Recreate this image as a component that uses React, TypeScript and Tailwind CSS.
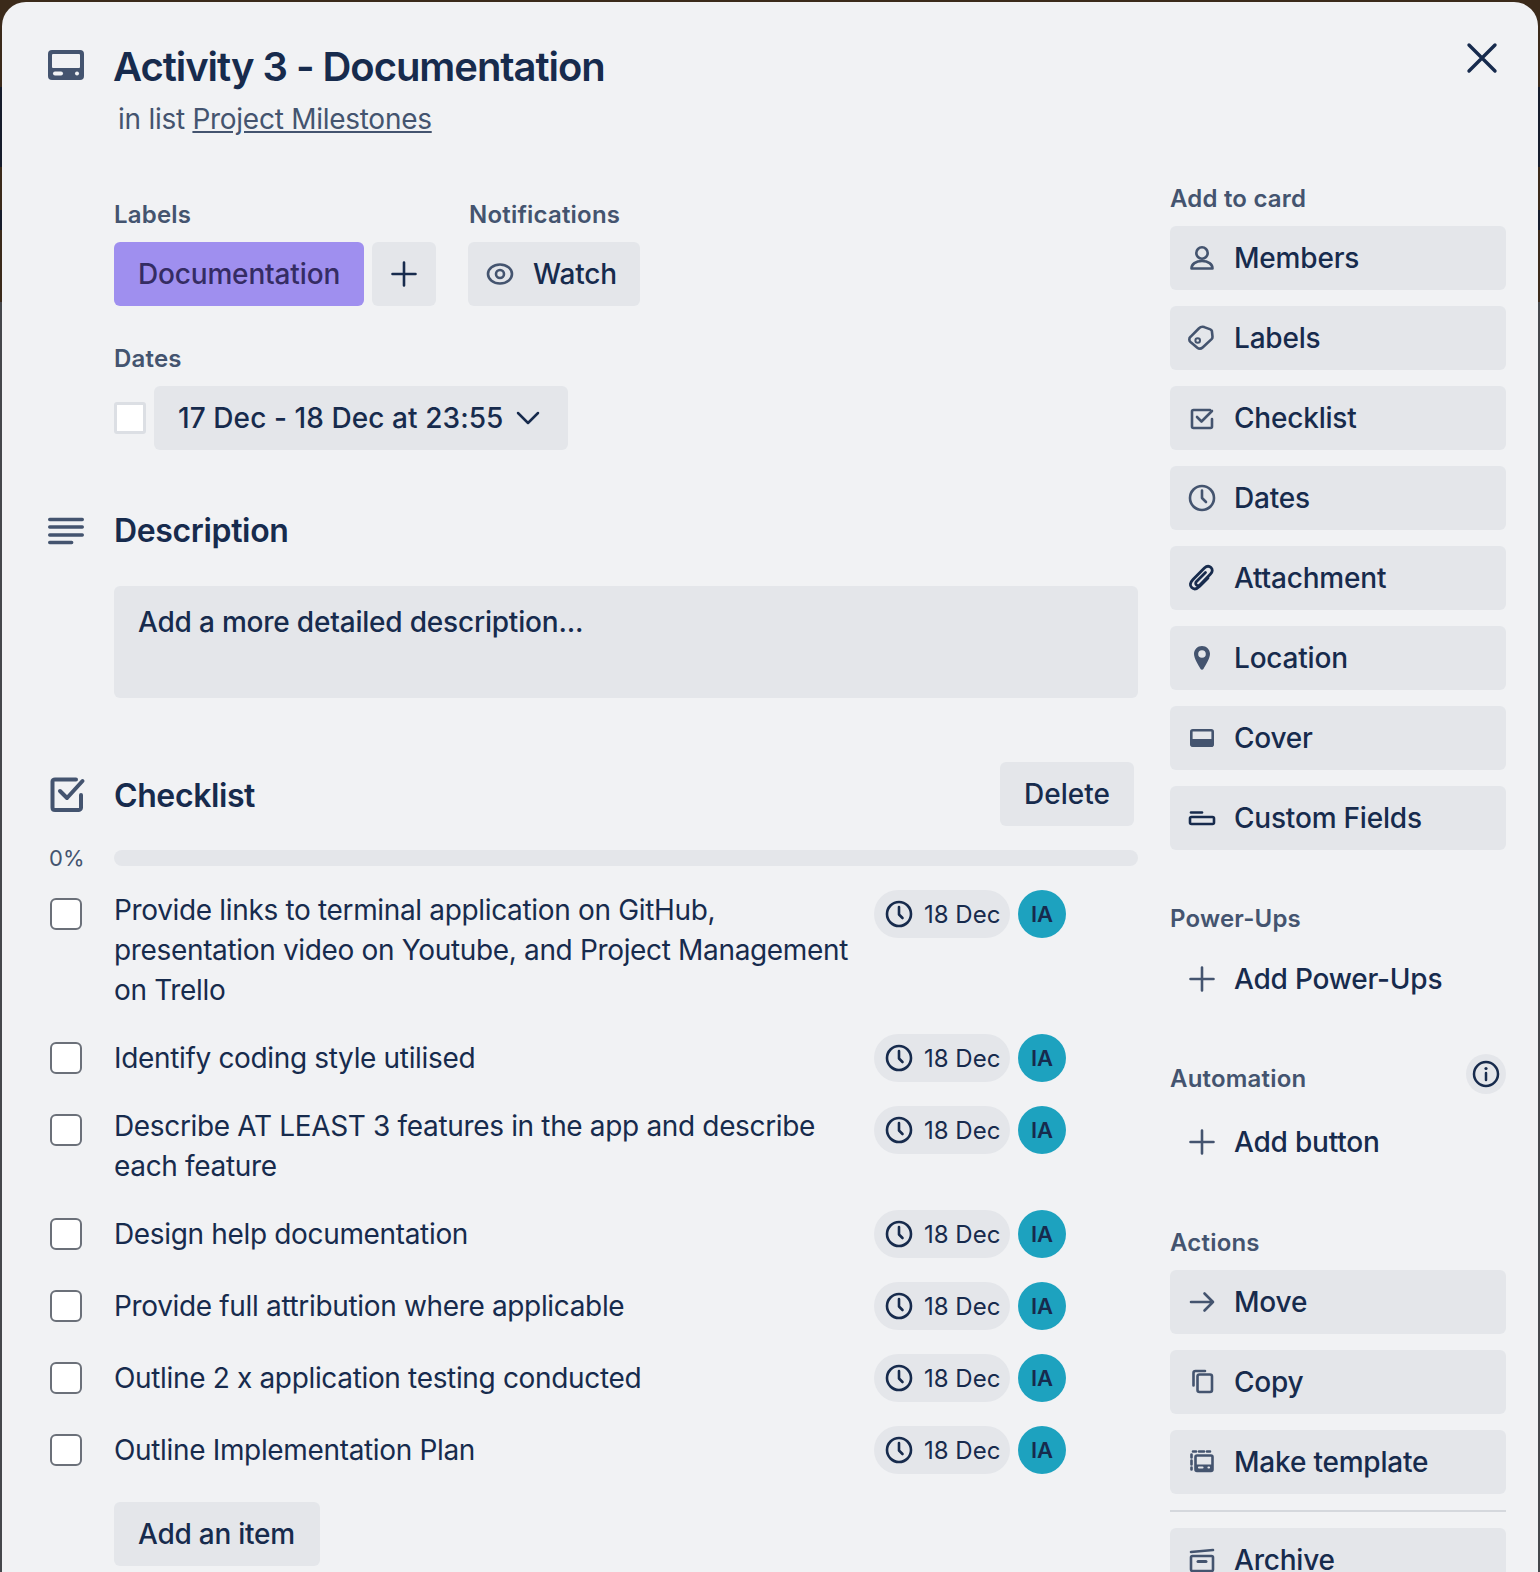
import type { ReactNode } from 'react'

const inter = { fontFamily: 'Inter, sans-serif' }

function Svg({ children, size = 32, w, className = 'text-[#44546F]' }: { children: ReactNode; size?: number; w?: number; className?: string }) {
  return (
    <svg width={w ?? size} height={size} viewBox={`0 0 ${w ?? size} ${size}`} fill="none" stroke="currentColor" strokeWidth="2.6" strokeLinecap="round" strokeLinejoin="round" className={`shrink-0 ${className}`}>
      {children}
    </svg>
  )
}

const icons: Record<string, ReactNode> = {
  Members: (
    <Svg>
      <circle cx="16" cy="11" r="5.700" />
      <path d="M5.500 26.500c0-4.400 4.200-7.500 10.500-7.500s10.500 3.100 10.500 7.500z" />
    </Svg>
  ),
  Labels: (
    <Svg>
      <path d="M4.500 14.800 12.800 6.500c1.600-1.600 3.600-2 5.400-1.400l6.200 2.300c.9.3 1.300.9 1.500 1.700l.6 5.500c.1.9-.2 1.800-.9 2.500l-9 8.400c-1.600 1.500-4 1.300-5.600-.1L4.500 20c-1.600-1.400-1.600-3.800 0-5.200z" />
      <circle cx="11.700" cy="18.500" r="2.300" strokeWidth="2" />
    </Svg>
  ),
  Checklist: (
    <Svg>
      <path d="M24 8H7.500C6.700 8 6 8.700 6 9.500v15c0 .8.700 1.500 1.500 1.500h17c.8 0 1.500-.7 1.500-1.500V17" />
      <path d="m11 15 4.500 4.500L26 9" />
    </Svg>
  ),
  Dates: (
    <Svg>
      <circle cx="16" cy="16" r="12" />
      <path d="M16 8.500V16l4 4" />
    </Svg>
  ),
  Attachment: (
    <Svg className="text-[#172B4D]">
      <path strokeWidth="2.800" d="M19.500 10.500 10.500 19.500c-1.100 1.100-1.100 2.600-.1 3.500s2.400 1 3.500-.1L24.500 12c2.200-2.200 2.300-4.800.5-6.500s-4.400-1.600-6.600.6L7 17.500c-3.200 3.200-3.300 6.200-1.300 8.100s5 1.700 8-1.300L22 16" />
    </Svg>
  ),
  Location: (
    <Svg>
      <path fillRule="evenodd" clipRule="evenodd" fill="currentColor" stroke="none" d="M16 4c4.400 0 8 3.500 8 7.800 0 4.800-4.200 11-6.600 15.300-.6 1-2.200 1-2.800 0C12.200 22.800 8 16.600 8 11.800 8 7.500 11.600 4 16 4zm0 4.200a3.800 3.800 0 1 0 0 7.600 3.800 3.800 0 0 0 0-7.600z" />
    </Svg>
  ),
  Cover: (
    <Svg>
      <rect x="5.300" y="8.300" width="21.400" height="15.400" rx="1.500" />
      <rect x="4.500" y="17" width="23" height="7.500" rx="1.500" fill="currentColor" stroke="none" />
    </Svg>
  ),
  'Custom Fields': (
    <Svg className="text-[#172B4D]">
      <path d="M5 10.500h11" />
      <rect x="4" y="15" width="24" height="7" rx="1.500" />
    </Svg>
  ),
  Move: (
    <Svg>
      <path d="M5 16h22M18.500 7.500 27 16l-8.500 8.500" />
    </Svg>
  ),
  Copy: (
    <Svg>
      <rect x="11.500" y="8.500" width="14.500" height="17.500" rx="2" />
      <path d="M7.500 19.500V7c0-1.200.8-2 2-2h9.500" />
    </Svg>
  ),
  'Make template': (
    <Svg>
      <path d="M7 5.500h3M13 5.500h5M21 5.500h3M5.500 8.500v3M5.500 14.500v4M5.500 21.500v2" />
      <rect x="9.500" y="9.500" width="17" height="15.500" rx="1.500" />
      <path d="M10 18.500h16v6H10z" fill="currentColor" stroke="none" />
      <path d="M13 21.500h3.500M22.500 21.500h.5" stroke="#E4E6EA" strokeWidth="2.200" />
    </Svg>
  ),
  Archive: (
    <Svg>
      <path d="M5 8 27 6" />
      <rect x="5" y="12" width="22" height="15" rx="1.500" />
      <path d="M12 17.500h8" strokeWidth="3" />
    </Svg>
  ),
}

const plusIcon = (
  <Svg>
    <path d="M16 4.500v23M4.500 16h23" />
  </Svg>
)

const addToCard = ['Members', 'Labels', 'Checklist', 'Dates', 'Attachment', 'Location', 'Cover', 'Custom Fields']
const actions = ['Move', 'Copy', 'Make template']

const checklist = [
  'Provide links to terminal application on GitHub, presentation video on Youtube, and Project Management on Trello',
  'Identify coding style utilised',
  'Describe AT LEAST 3 features in the app and describe each feature',
  'Design help documentation',
  'Provide full attribution where applicable',
  'Outline 2 x application testing conducted',
  'Outline Implementation Plan',
]

function SideButton({ label, muted, icon }: { label: string; muted?: boolean; icon: ReactNode }) {
  return (
    <div className={`flex h-16 items-center rounded-md pl-4 text-[28px] leading-10 font-medium tracking-[-0.2px] text-[#172B4D] ${muted ? '' : 'bg-[#E4E6EA]'}`}>
      <span className="flex w-8 justify-center">{icon}</span>
      <span className="ml-4">{label}</span>
    </div>
  )
}

function SideTitle({ children, className = '' }: { children: ReactNode; className?: string }) {
  return <div className={`text-2xl leading-8 font-semibold tracking-[0.2px] text-[#44546F] ${className}`}>{children}</div>
}

function ChecklistRow({ text }: { text: string }) {
  return (
    <div className="flex items-start">
      <div className="mt-2 ml-[2px] h-8 w-8 rounded-md border-2 border-[#6B7079] bg-white" />
      <div className="ml-8 flex min-h-12 w-[746px] items-center text-[28px] leading-10 tracking-[-0.34px] text-[#172B4D]">{text}</div>
      <div className="ml-[14px] flex h-12 w-[136px] items-center rounded-full bg-[#E4E6EA] pl-[10px] text-2xl text-[#172B4D]">
        <Svg size={30} className="text-[#172B4D]">
          <circle cx="15" cy="15" r="12" />
          <path d="M15 8v7.500l3.500 3.500" />
        </Svg>
        <span className="mt-[2px] ml-[10px]">18 Dec</span>
      </div>
      <div className="ml-2 flex h-12 w-12 items-center justify-center rounded-full bg-[#1DA2BF] text-[22px] font-semibold text-[#172B4D]">IA</div>
    </div>
  )
}

export default function App() {
  return (
    <div
      className="h-[1572px] w-[1540px] overflow-hidden bg-[linear-gradient(to_bottom,#3B2A1A_87px,#161C2B_87px,#161C2B_167px,#3B2A1A_167px,#3B2A1A_210px,#161C2B_210px,#161C2B_230px,#3B2A1A_230px,#3B2A1A_302px,#45474B_302px)] px-[2px] pt-[2px]"
      style={inter}
    >
      <div className="relative h-full overflow-hidden rounded-t-[24px] bg-[#F1F2F4] pt-[41px] pr-[32px] pl-[46px] text-[#172B4D]">
        {/* close */}
        <button className="absolute top-[40px] right-[40px] text-[#172B4D]">
          <svg width="32" height="32" viewBox="0 0 32 32" fill="none" stroke="currentColor" strokeWidth="3.400" strokeLinecap="round">
            <path d="M3 3l26 26M29 3 3 29" />
          </svg>
        </button>

        {/* header */}
        <div className="flex">
          <div className="w-[66px] pt-[7px]">
            <svg width="36" height="30" viewBox="0 0 36 30" className="text-[#44546F]">
              <rect width="36" height="30" rx="4" fill="currentColor" />
              <rect x="4" y="4" width="28" height="14" rx="1" fill="#F1F2F4" />
              <rect x="5" y="21.500" width="10" height="4" rx="2" fill="#F1F2F4" />
              <circle cx="29" cy="23.500" r="2" fill="#F1F2F4" />
            </svg>
          </div>
          <div>
            <h1 className="-ml-px text-[40px] leading-12 font-semibold tracking-[-1.05px]">Activity 3 - Documentation</h1>
            <div className="mt-2 pl-1 text-[28px] leading-10 tracking-[-0.27px] text-[#44546F]">
              in list <span className="underline">Project Milestones</span>
            </div>
          </div>
        </div>

        <div className="mt-[44px] flex gap-8">
          {/* main column */}
          <div className="w-[1090px] pt-4">
            <div className="pl-[66px]">
              <div className="flex">
                <div className="w-[354px]">
                  <div className="text-2xl leading-8 font-semibold tracking-[0.2px] text-[#44546F]">Labels</div>
                  <div className="mt-[11px] flex gap-2">
                    <div className="flex h-16 w-[250px] items-center justify-center rounded-md bg-[#9F8FEF] text-[28px] font-medium tracking-[-0.15px] text-[#352C63]">Documentation</div>
                    <div className="flex h-16 w-16 items-center justify-center rounded-md bg-[#E4E6EA]">
                      <Svg className="text-[#172B4D]">
                        <path d="M16 4.500v23M4.500 16h23" />
                      </Svg>
                    </div>
                  </div>
                </div>
                <div>
                  <div className="pl-px text-2xl leading-8 font-semibold tracking-[0.2px] text-[#44546F]">Notifications</div>
                  <div className="mt-[11px] flex h-16 w-[172px] items-center rounded-md bg-[#E4E6EA] pl-[18px] text-[28px] font-medium tracking-[-0.15px]">
                    <Svg size={28} className="text-[#44546F]">
                      <ellipse cx="14" cy="14" rx="12" ry="9.500" />
                      <circle cx="14" cy="14" r="4" />
                    </Svg>
                    <span className="ml-[19px]">Watch</span>
                  </div>
                </div>
              </div>

              <div className="mt-[37px] text-2xl leading-8 font-semibold tracking-[0.2px] text-[#44546F]">Dates</div>
              <div className="mt-[11px] flex items-center">
                <div className="h-8 w-8 rounded-[3px] border-[3px] border-[#DCDFE4] bg-white" />
                <div className="ml-2 flex h-16 w-[414px] items-center rounded-md bg-[#E4E6EA] pl-6 text-[28px] font-medium tracking-[0.08px]">
                  17 Dec - 18 Dec at 23:55
                  <svg width="24" height="24" viewBox="0 0 24 24" fill="none" stroke="#172B4D" strokeWidth="2.500" strokeLinecap="round" strokeLinejoin="round" className="ml-3">
                    <path d="m2 7 10 10L22 7" />
                  </svg>
                </div>
              </div>
            </div>

            {/* description */}
            <div className="mt-[61px] flex items-center">
              <div className="w-[66px]">
                <Svg size={30} w={36} className="text-[#44546F]">
                  <path strokeWidth="3.400" d="M1.700 3.500h32.600M1.700 11h32.600M1.700 19h32.600M1.700 26.500h22" />
                </Svg>
              </div>
              <h2 className="text-[32px] leading-10 font-semibold tracking-[-0.35px]">Description</h2>
            </div>
            <div className="mt-[35px] ml-[66px] h-28 rounded-md bg-[#E4E6EA] px-6 py-[16px] text-[28px] leading-10 font-medium tracking-[-0.2px]">Add a more detailed description...</div>

            {/* checklist */}
            <div className="mt-16 flex h-16 items-center">
              <div className="w-[66px]">
                <svg width="36" height="36" viewBox="0 0 36 36" fill="none" stroke="#44546F" strokeWidth="4" strokeLinecap="round" strokeLinejoin="round" className="ml-[2px]">
                  <path d="M26 3.500H5C3.500 3.500 2.500 4.500 2.500 5.500v26c0 1.500 1 2.500 2.500 2.500h24c1 0 2-1 2-2.500V19" />
                  <path d="m10 15 7 7L32.500 5" />
                </svg>
              </div>
              <h2 className="mt-1 text-[32px] leading-10 font-semibold tracking-[-0.4px]">Checklist</h2>
              <div className="mr-1 ml-auto flex h-16 w-[134px] items-center justify-center rounded-md bg-[#E4E6EA] text-[28px] font-medium">Delete</div>
            </div>

            <div className="mt-6 flex h-4 items-center">
              <span className="w-[66px] pl-[1px] text-[22px] text-[#44546F]">0%</span>
              <div className="h-4 flex-1 rounded-full bg-[#E4E6EA]" />
            </div>

            <div className="mt-6 flex flex-col gap-6">
              {checklist.map((text) => (
                <ChecklistRow key={text} text={text} />
              ))}
            </div>

            <div className="mt-7 ml-[66px] flex h-16 w-[206px] items-center justify-center rounded-md bg-[#E4E6EA] pr-px text-[28px] font-medium tracking-[-0.25px]">Add an item</div>
          </div>

          {/* sidebar */}
          <div className="w-[336px]">
            <SideTitle>Add to card</SideTitle>
            <div className="mt-[11px] flex flex-col gap-4">
              {addToCard.map((label) => (
                <SideButton key={label} label={label} icon={icons[label]} />
              ))}
            </div>

            <SideTitle className="mt-[53px]">Power-Ups</SideTitle>
            <div className="mt-3">
              <SideButton label="Add Power-Ups" muted icon={plusIcon} />
            </div>

            <div className="mt-[43px] flex h-10 items-center justify-between">
              <SideTitle className="mt-[10px]">Automation</SideTitle>
              <div className="flex h-10 w-10 items-center justify-center rounded-full bg-[#E4E6EA]">
                <svg width="28" height="28" viewBox="0 0 28 28" fill="none" stroke="#172B4D" strokeWidth="2.500" strokeLinecap="round">
                  <circle cx="14" cy="14" r="12" />
                  <path d="M14 13v7" />
                  <circle cx="14" cy="8.500" r="1.600" fill="#172B4D" stroke="none" />
                </svg>
              </div>
            </div>
            <div className="mt-4">
              <SideButton label="Add button" muted icon={plusIcon} />
            </div>

            <SideTitle className="mt-[53px]">Actions</SideTitle>
            <div className="mt-[11px] flex flex-col gap-4">
              {actions.map((label) => (
                <SideButton key={label} label={label} icon={icons[label]} />
              ))}
            </div>
            <div className="mt-4 h-[2px] bg-[#D5D8DD]" />
            <div className="mt-4">
              <SideButton label="Archive" icon={icons.Archive} />
            </div>
          </div>
        </div>
      </div>
    </div>
  )
}
